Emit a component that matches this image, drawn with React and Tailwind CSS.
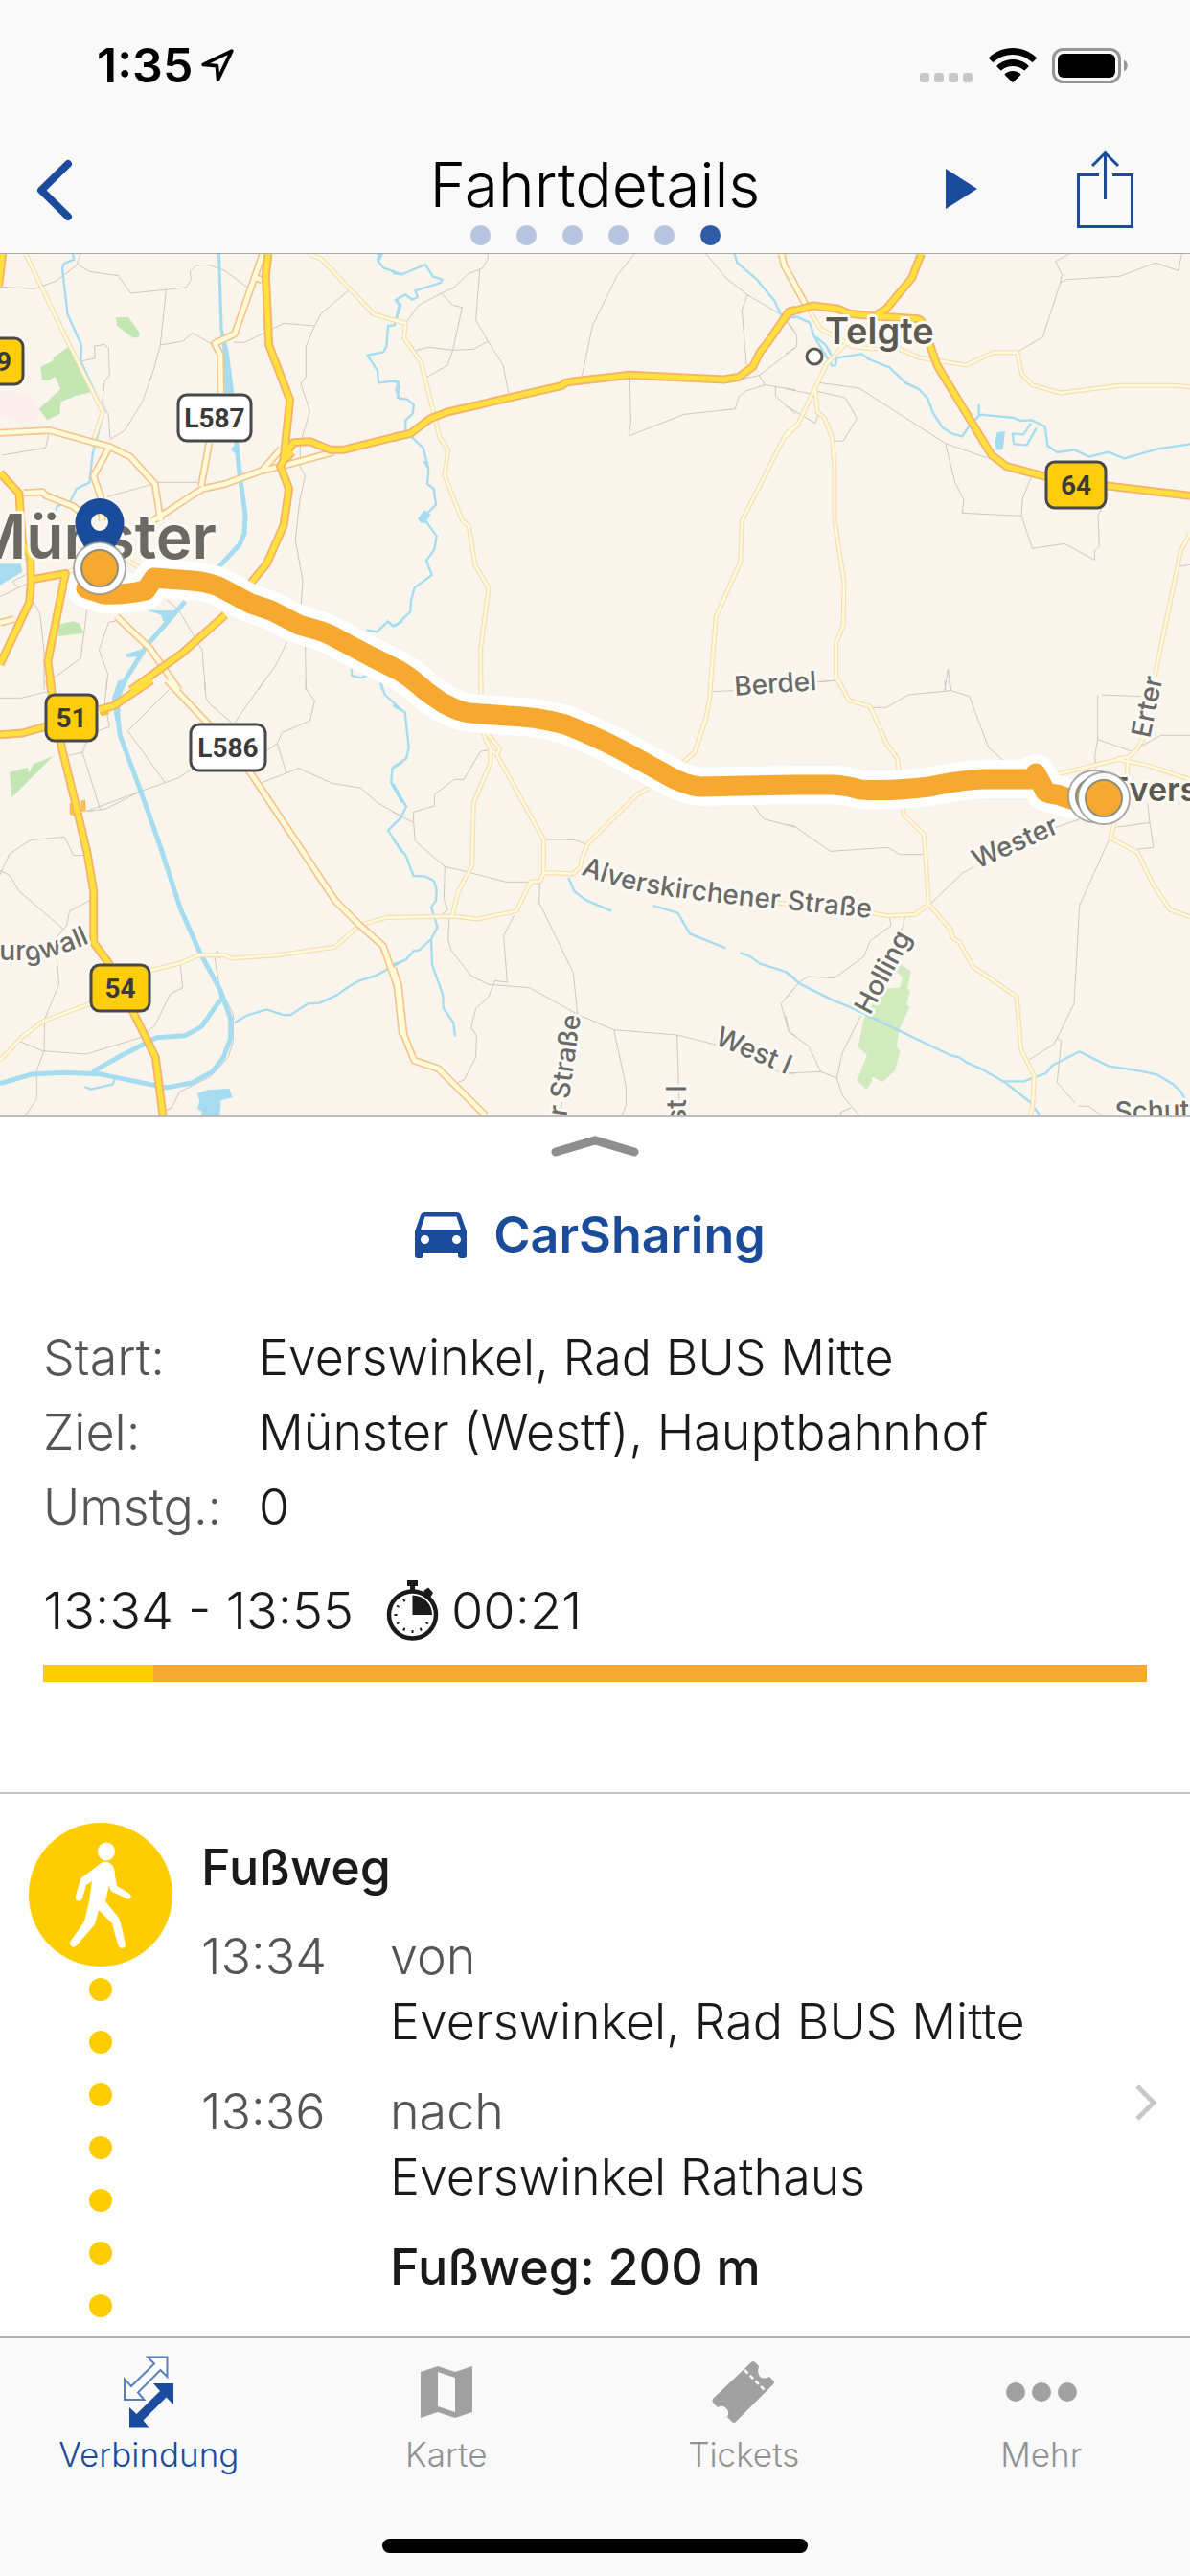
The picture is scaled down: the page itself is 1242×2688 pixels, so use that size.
import React from "react";

const SANS = "font-['Inter','Liberation_Sans',sans-serif]";

/* Map geometry: six tiles, each drawn on its own 3x grid. */
const TILES = [
  {
    x: 0,
    y: 260,
    tracks:
      "M0 118L108 124L175 100L240 50L253 14M245 48L280 70L370 83L410 138L582 120L598 95L595 70L615 50L658 50L705 68L772 118M520 128L502 300L572 288L602 262L663 297M502 300L480 380L445 480L390 568L345 595L340 522L320 480L328 412L343 395L340 312L328 298L296 303L297 342L258 350M733 292L765 292L828 262L888 232L985 240M1090 130L1005 202L985 240L958 305L958 400L942 420L970 508L940 610L940 680L955 710L938 790L925 910L948 1040L943 1110M5 645L143 622L152 580M490 730L618 730M335 775L470 738M0 1088L100 1040M88 1015L40 1040L55 1060M105 1105L125 1140L138 1260L138 1380M272 1130L253 1280L165 1345M360 1165L340 1168L310 1255L338 1330L332 1380M522 1098L560 1130L633 1255L643 1380M898 1230L865 1300L808 1380M956 1245L958 1380",
    stream:
      "M228 14L232 32L200 45L195 60L212 205L255 300L253 350L325 510L290 640L280 730L240 750L220 790L178 805L175 822L158 822M1190 14L1182 35L1200 58L1260 80M1260 145L1240 160L1255 175L1235 238L1215 240L1210 305L1200 322L1150 332L1182 380L1185 418L1240 412L1250 428L1245 465L1260 470M1148 1192L1180 1198L1215 1165L1230 1180L1260 1165M1130 1342L1102 1335L1100 1315M1130 1342L1160 1330L1190 1350L1197 1380",
    canal:
      "M740 600L750 700L768 830L765 890L750 925L680 1000M580 1103L460 1240L372 1380",
    water:
      "M681 14L690 14L698 250L716 320L733 450L704 450L696 300L688 250ZM0 985L65 985L70 1010L0 1052ZM460 1130L550 1132L535 1165L510 1165L505 1145ZM392 1268L450 1250L440 1275L398 1278ZM722 625L740 610L745 650ZM1180 14L1200 14L1188 40Z",
    park:
      "M215 305L240 340L285 448L240 458L190 478L188 515L148 535L122 500L190 438L172 398L155 410L132 410L127 368L165 350L168 338ZM362 213L402 213L437 262L435 277L415 277L367 240ZM180 1175L230 1165L250 1172L262 1202L182 1212ZM10 885L25 880L30 935L12 910ZM72 970L85 962L85 980Z",
    rose: "M0 448L45 448L65 458L95 448L125 500L110 530L70 545L0 520Z",
    lane: "M80 14L210 285L322 510L292 600M965 14L1005 30L1170 203L1260 230M395 970L440 1000M210 1010L250 1000",
    road:
      "M0 575L155 567L293 605L343 618L408 650L485 735L503 850M343 618L293 710L315 775L320 850M823 14L735 265L672 295L690 330L692 450M655 605L630 742M445 870L503 835L610 765L635 750L705 735L820 693L880 680L1045 635M820 693L880 625M75 763L133 760L145 772L230 805L260 830M365 1150L470 1250L560 1380M0 1170L45 1158M803 90L820 97",
    major:
      "M8 14L-4 115M0 700L60 765L70 920L95 960L97 1045L92 1105L0 1300M97 1035L205 1015L150 1290L162 1380M840 14L832 80L842 300L908 472L888 660L878 680L905 750L888 865L835 985L785 1045M705 1145L570 1265L410 1380M888 650L920 605L970 602L1035 628L1075 628L1260 582M885 665L915 635",
  },
  {
    x: 410,
    y: 260,
    tracks:
      "M298 14L298 30L280 60L235 78L192 120L152 138L80 176L45 225M152 138L187 175L217 182L188 315L172 363L108 400M272 65L260 222L298 288L345 362L362 450M72 317L112 307L188 316L253 313L298 288M757 14L703 82L625 240L592 398M980 14L1045 92L1110 143L1215 205L1260 262M1110 143L1093 190L1107 362M742 405L745 545L738 585L912 517L1072 500L1083 462L1103 445L1165 425L1260 440M1100 405L1147 395L1165 425M1147 395L1260 308M1198 432L1198 460L1260 515",
    stream:
      "M0 75L30 78L102 48L125 85L155 95L150 105L70 130L78 150L60 158L40 142L8 160L20 175L5 240M0 415L18 415L10 440L20 467L45 470L66 487L62 515L40 535L40 570L95 622L112 690L108 735L128 750L135 800L95 840L137 898L130 940L105 975L122 1020L68 1060L57 1100L55 1135L10 1178L0 1180M1070 14L1078 42L1140 95L1195 162L1215 205L1260 215",
    water: "M78 843L100 817L118 830L103 857L88 857ZM92 662L112 665L110 690Z",
    lane: "M0 220L40 232L35 278L88 353L147 590L173 628L162 708L217 848L238 868L258 990L300 1062L275 1250L276 1380M1260 553L1230 580L1093 850L1088 980L1012 1150L993 1380",
    road: "M1217 14L1225 50L1295 178",
    major:
      "M0 590L55 577L118 530L170 510L530 427L540 418L570 413L742 394L1037 408L1083 400L1127 368L1150 322L1175 290L1240 195L1260 190",
  },
  {
    x: 820,
    y: 260,
    tracks:
      "M890 14L845 38L865 80L860 105L880 95L1045 85L1158 43L1230 67L1240 14M860 105L805 275L728 320M0 437L75 452M105 418L230 435L500 608L630 653M100 445L187 465L223 530L180 601L148 600M0 490L93 545L102 515M10 230L35 270L35 305L0 328M500 608L530 730L558 785L553 826L738 835L742 780L768 715M738 835L773 937L873 922L967 973L967 945L982 930L978 835L1010 765M1235 993L1266 988M95 1356L160 1350M498 1380L508 1315L518 1380",
    stream:
      "M10 212L35 212L75 230L90 275L145 365L155 365L160 340L238 328L262 345L325 370L375 418L415 437L445 467L460 510L490 557L520 577L553 586L580 545L610 518L715 528L735 537L770 535L812 555L820 615L850 636L905 628L950 650L1010 635L1060 655L1165 625L1266 610M95 275L125 300L150 345M605 485L605 520M768 545L745 580L710 577L715 610L755 613L785 560",
    water: "M662 573L687 570L680 628L660 628L655 603Z",
    lane: "M70 185L110 250L185 290L210 305L280 312L350 310L420 340L565 363L650 323L725 323L740 392L773 425L860 450L1045 427L1220 427L1266 431M185 298L128 360L92 435L38 548L0 588M92 435L100 510L123 530L145 590L153 680L153 845L183 1045L180 1180L158 1232L158 1340L180 1380M185 298L260 235M1266 890L1237 945L1155 1340",
    major:
      "M-10 225L10 198L85 177L165 187L200 202L285 210L415 218L425 225L475 365L645 645L692 680L850 722L1266 772M425 14L395 90L315 187L285 205",
  },
  {
    x: 0,
    y: 710,
    tracks:
      "M0 55L67 55L148 35M335 0L328 70L343 145L310 157M215 235L258 225L272 190M258 225L313 402M640 0L645 55L655 72L725 132M828 0L735 132M530 28L400 158L517 320L560 305L595 280M517 320L440 347L330 403L270 410L440 347M958 0L958 25L985 65L970 127L883 163L868 197L835 220M868 197L897 290M820 320L897 290L935 275L1040 322L1130 337L1180 382L1260 427M260 548L230 548L202 490L95 500L30 543L0 608M0 595L30 610L60 660L198 778M283 688L218 722L208 768L172 812L185 950L140 1060L138 1160L115 1220L115 1310L80 1362M62 1130L133 1160L270 1170L440 1118M565 890L572 962L533 982L485 1080L440 1118M688 960L672 868L680 845L688 870M688 960L730 1045L730 1130L715 1180L660 1240L562 1288L537 1338L520 1345",
    stream:
      "M265 1272L285 1280L352 1265L360 1248M735 1072L775 1048L835 1030L890 1048L910 1047L965 1012L1000 1010L1055 985L1090 960L1125 940L1175 925L1260 880M1190 0L1205 45L1260 95M1260 257L1228 275L1225 322L1260 383M1260 425L1215 470L1235 500L1260 540",
    canal:
      "M385 0L362 50L375 170L440 345L500 515L565 715L625 850L690 970L722 1060L722 1120L700 1180L665 1225L600 1260L520 1275L310 1232L200 1228L100 1233L0 1262M690 1000L630 1085L580 1112L490 1118L370 1180L290 1225",
    water:
      "M370 0L400 0L378 50L375 130L362 130L350 60ZM618 1293L650 1282L718 1278L728 1305L692 1315L688 1362L630 1362L632 1350L618 1340L625 1318ZM682 960L705 1000L690 1010Z",
    park: "M30 288L87 272L90 290L105 262L165 238L37 367Z",
    lane: "M0 1190L70 1115L133 1068L300 1005M470 908L565 885L622 860L703 860L725 870L870 860L1048 835L1125 767L1210 742L1260 742",
    road: "M523 0L660 145L785 290L1050 690L1125 765L1200 832L1243 955L1260 1110",
    major:
      "M155 0L193 210L240 400L273 540L293 660L293 820L340 885L420 1045L487 1180L510 1362M0 170L70 165L160 140M310 92L355 80L475 0",
    ramp: "M225 385L225 415L238 415M260 375L262 410M315 105L340 100",
  },
  {
    x: 410,
    y: 710,
    tracks:
      "M305 218L275 222L222 310L193 310L130 357L130 393L65 412L65 445L0 412M65 445L70 503L163 583L215 595L355 631L430 631M163 583L160 685L172 720L155 730M460 635L458 695L565 915L578 1045M380 735L347 800L358 945L320 940L300 990L260 1027L245 1088L262 1110L260 1180L222 1252L205 1258M177 740L173 812L183 845L245 925L300 952L428 962L578 1045L692 1094L890 1110L1010 1140M692 1094L730 1270L730 1330L718 1362M890 1110L898 1362M477 498L567 499L603 512M1132 393L1160 433L1260 460M1000 35L1065 32M1260 960L1215 1013L1240 1100L1260 1112M1180 1215L1220 1230L1260 1230M528 1320L527 1362",
    stream:
      "M0 78L38 100L50 210L42 245L0 272M0 322L42 395L22 435L0 452M0 495L40 548L65 612L100 613L128 627L137 655L135 690L120 710L140 772L120 810L82 845L65 847L40 875L0 890M120 810L123 890L157 985L158 1025L190 1072L195 1115M550 618L568 660L605 688L685 722M815 705L892 728L930 793L1042 838M1087 853L1115 862L1150 887L1230 912L1260 935",
    lane: "M276 0L276 150L305 215L305 260L253 382L248 580L205 660L185 740M290 160L335 215L325 232L305 215M325 232L472 498L472 605L460 630L432 630L387 722L265 747L185 738L0 742M472 602L565 605L587 585L592 555L610 512L768 355L800 338M905 260L945 225L980 120L993 50L995 0M1200 695L1260 705",
    road: "M0 900L18 955L35 1110L67 1190L142 1215L290 1362",
  },
  {
    x: 820,
    y: 710,
    tracks:
      "M95 5L160 0M498 0L500 33M510 0L518 32L575 50L635 210L678 247L680 252M518 32L385 45L315 85L272 85M990 45L1115 50M977 45L977 185L1085 222M977 185L968 235L972 280M1105 210L1175 172L1266 172M0 452L25 455L140 535L320 523L358 545L432 545M455 698L555 602L590 583M830 465L920 435M1012 500L920 705L903 1012L850 1120L838 1140L763 1187M850 1120L863 1128L850 1258L905 1322M1035 460L1140 445L1152 523L1102 528M1140 445L1133 385M325 740L330 768L265 815L245 865L152 932L70 927L42 945L0 995M373 740L368 770L355 795M235 1050L178 1165L160 1245L110 1225L72 1145L10 1100L0 1050M110 1225L0 1230M160 1245L178 1300L230 1362M172 1362L172 1352L205 1338M915 1332L948 1333L990 1362",
    stream:
      "M0 912L45 950L145 1000L200 1022L515 1173L542 1180L565 1195L620 1220L683 1256L765 1320L795 1360M683 1255L745 1255L815 1230L835 1205L920 1162L1010 1207L1110 1223L1165 1235L1210 1262L1235 1285L1258 1322",
    wood: "M360 888L393 912L380 965L390 970L378 1015L388 1023L355 1095L348 1145L358 1160L342 1222L303 1257L270 1240L270 1255L253 1280L223 1253L255 1172L227 1147L245 1058L300 965L357 962L367 932L348 912Z",
    lane: "M165 0L198 62L265 82L317 200L350 245L370 420L433 483L448 700L405 733L320 737L260 727M448 700L515 778L523 805L545 820L585 895L723 990L737 1155L778 1238L773 1335L765 1362M855 293L1040 248L1130 265L1266 310M1120 180L1100 215L1073 240L1040 245M1073 240L1068 310L1028 450L1018 493L1103 540L1148 635L1203 718L1266 740",
  },
];

/* Painted in order, bottom to top. */
const LAYERS = [
  { key: "rose", fill: "#fceeec" },
  { key: "park", fill: "#c3e6b2" },
  { key: "wood", fill: "#d1eabe" },
  { key: "tracks", stroke: "#cbc8c2", width: 3 },
  { key: "water", fill: "#a5dcf0" },
  { key: "stream", stroke: "#a5dcf0", width: 7 },
  { key: "canal", stroke: "#a5dcf0", width: 15 },
  { key: "lane", stroke: "#f8dcb4", width: 15 },
  { key: "lane", stroke: "#fffadb", width: 8 },
  { key: "road", stroke: "#f6c48c", width: 24 },
  { key: "road", stroke: "#fffad8", width: 14 },
  { key: "ramp", stroke: "#f8b26c", width: 14 },
  { key: "ramp", stroke: "#ffc928", width: 7 },
  { key: "major", stroke: "#f8b26c", width: 27 },
  { key: "major", stroke: "#ffe03c", width: 16 },
];

const ROUTE =
  "M90 614L108 620Q130 621 152 616L161 603L200 606Q215 607 228 612L262 630L283 637L312 652L333 658Q345 662 353 667L387 685L417 700Q430 708 443 720Q460 733 467 736Q478 742 490 744L530 747Q560 748 590 756Q623 769 653 785L693 807Q713 819 730 821L830 819L870 819Q885 820 898 824Q930 826 970 821Q1003 814 1027 813L1077 813L1081 807L1088 820L1091 826Q1097 829 1103 829L1118 834";

function Shield({ x, y, w, label, white }) {
  return (
    <g>
      <rect x={x + 2} y={y + 2} width={w - 4} height={48} rx={9} fill={white ? "#fff" : "#ffcd0b"} stroke="#48484a" strokeWidth={3} />
      <text x={x + w / 2} y={y + 36} textAnchor="middle" className="font-['Roboto',sans-serif] text-[28px] font-bold" fill="#3a3a3a">
        {label}
      </text>
    </g>
  );
}

function Stop({ x, y, color }) {
  return (
    <g>
      <circle cx={x} cy={y} r={27} fill="#fff" stroke="#8d8d8d" strokeOpacity={0.75} strokeWidth={2} />
      <circle cx={x} cy={y} r={19} fill={color} stroke="#8d8d7a" strokeWidth={2} />
    </g>
  );
}

const STREETS = [
  { text: "Berdel", at: "translate(767 726) rotate(-4)" },
  { text: "Wester", at: "translate(1020 907) rotate(-24)" },
  { text: "Holling", at: "translate(908 1060) rotate(-62)" },
  { text: "Erter", at: "translate(1200 771) rotate(-78)" },
  { text: "West I", at: "translate(745 1089) rotate(23)" },
  { text: "er Straße", at: "translate(606 1060) rotate(-82)", end: true },
  { text: "West I", at: "translate(716 1132) rotate(-90)", end: true },
  { text: "Schut", at: "translate(1164 1170) rotate(-2)" },
];

function RouteMap() {
  return (
    <svg viewBox="0 265 1242 899" preserveAspectRatio="xMidYMid slice" className="block aspect-[1242/899] w-full bg-[#f9f5ed]" role="img" aria-label="Karte">
      <rect x="0" y="265" width="1242" height="899" fill="#f9f5ed" />
      {LAYERS.map((layer, i) => (
        <g key={i} fill={layer.fill || "none"} stroke={layer.stroke || "none"} strokeWidth={layer.width} strokeLinejoin="round">
          {TILES.filter((t) => t[layer.key]).map((t) => (
            <path key={t.x + "-" + t.y} transform={`translate(${t.x} ${t.y}) scale(${1 / 3})`} d={t[layer.key]} />
          ))}
        </g>
      ))}

      <g fill="#6a6a68" stroke="#fcf9f3" strokeWidth={6} strokeLinejoin="round" paintOrder="stroke" className={`${SANS} text-[28px] font-medium`}>
        {STREETS.map((s, i) => (
          <text key={i} transform={s.at} textAnchor={s.end ? "end" : "start"}>
            {s.text}
          </text>
        ))}
        <path id="alver" d="M606 912Q650 929 690 934Q760 944 820 949L930 960" fill="none" stroke="none" />
        <path id="wall" d="M-18 1002L35 1002Q60 1000 106 978" fill="none" stroke="none" />
        <text>
          <textPath href="#alver">Alverskirchener Straße</textPath>
        </text>
        <text>
          <textPath href="#wall">burgwall</textPath>
        </text>
      </g>
      <g fill="#5c5a50" stroke="#fcf9f3" strokeWidth={6} strokeLinejoin="round" paintOrder="stroke" className={`${SANS} font-semibold`}>
        <circle cx="850" cy="372" r="8" fill="#fff" stroke="#5c5a50" strokeWidth={3} paintOrder="normal" />
        <text x="861" y="359" className="text-[38px]">Telgte</text>
        <text x="1158" y="836" className="text-[34px]">Everswinkel</text>
        <text x="226" y="583" textAnchor="end" fill="#6b6963" className="text-[64px]">Münster</text>
      </g>

      <Shield x={-50} y={351} w={76} label="219" />
      <Shield x={184} y={410} w={80} label="L587" white />
      <Shield x={197} y={754} w={82} label="L586" white />
      <Shield x={46} y={723} w={57} label="51" />
      <Shield x={93} y={1005} w={65} label="54" />
      <Shield x={1090} y={480} w={66} label="64" />

      <g fill="none" strokeLinejoin="round" strokeLinecap="round">
        <path d={ROUTE} stroke="#fff" strokeWidth={40} />
        <path d={ROUTE} stroke="#f6a931" strokeWidth={21} />
      </g>
      <path fillRule="evenodd" fill="#1b4b9b" d="M104 520a25.500 25.500 0 0 1 25.500 25.500c0 17-17 33-25.500 49c-8.500-16-25.500-32-25.500-49a25.500 25.500 0 0 1 25.500-25.500zm0 16a9 9 0 1 0 0 18a9 9 0 1 0 0-18z" />
      <Stop x={104} y={593} color="#f6a931" />
      <Stop x={1142} y={831} color="#d5ac1f" />
      <Stop x={1152} y={833} color="#f6a931" />
    </svg>
  );
}

function StatusBar() {
  return (
    <div className="flex h-[132px] items-center justify-between pt-1 pr-[64px] pl-[101px]">
      <div className="flex items-center gap-2 text-[50px] leading-[60px] font-semibold text-black">
        <span>1:35</span>
        <svg width="36" height="36" viewBox="0 0 34 34" fill="none" stroke="#000" strokeWidth="3.500" strokeLinejoin="round">
          <path d="M31 3L3 16.500L16.500 17.500L17.500 31Z" />
        </svg>
      </div>
      <div className="flex items-center gap-4">
        <svg width="56" height="36" viewBox="0 0 56 36" fill="#c7c7c7">
          <rect x="0" y="26" width="10" height="10" rx="3" />
          <rect x="15" y="26" width="10" height="10" rx="3" />
          <rect x="30" y="26" width="10" height="10" rx="3" />
          <rect x="45" y="26" width="10" height="10" rx="3" />
        </svg>
        <svg width="50" height="36" viewBox="0 0 50 36" fill="#000">
          <path d="M25 0C34.500 0 43 3.700 49.500 9.700C50 10.200 50 10.800 49.600 11.300L46.300 14.600C45.900 15 45.300 15 44.800 14.600C39.500 9.800 32.500 7 25 7S10.500 9.800 5.200 14.600C4.700 15 4.100 15 3.700 14.600L.4 11.300C0 10.800 0 10.200 .5 9.700C7 3.700 15.500 0 25 0Z" />
          <path d="M25 12C31.300 12 37 14.400 41.200 18.200C41.700 18.700 41.700 19.300 41.300 19.800L37.900 23.100C37.500 23.500 36.900 23.500 36.400 23.100C33.400 20.500 29.400 19 25 19S16.600 20.500 13.600 23.100C13.100 23.500 12.500 23.500 12.100 23.100L8.700 19.800C8.300 19.300 8.300 18.700 8.800 18.200C13 14.400 18.700 12 25 12Z" />
          <path d="M25 24C28 24 30.800 25.100 33 26.800C33.500 27.300 33.500 27.900 33 28.400L25.700 35.600C25.300 36 24.700 36 24.300 35.600L17 28.400C16.500 27.900 16.500 27.300 17 26.800C19.200 25.100 22 24 25 24Z" />
        </svg>
        <svg width="80" height="37" viewBox="0 0 80 37">
          <rect x="1.500" y="1.500" width="69" height="34" rx="10" fill="none" stroke="#959595" strokeWidth="3" />
          <rect x="6" y="6" width="60" height="25" rx="6" fill="#000" />
          <path d="M75 12.500C80 15 80 22 75 24.500Z" fill="#959595" />
        </svg>
      </div>
    </div>
  );
}

function NavBar() {
  return (
    <div className="grid h-[132px] grid-cols-[1fr_auto_1fr] items-start px-[36px]">
      <button type="button" aria-label="Zurück" className="mt-[33px] w-[44px]">
        <svg width="44" height="68" viewBox="0 0 44 68" fill="none" stroke="#1b4b9b" strokeWidth="8" strokeLinecap="round" strokeLinejoin="round">
          <path d="M35 6L7 33.500L35 61" />
        </svg>
      </button>
      <div className="flex flex-col items-center">
        <h1 className="mt-[22px] text-[64px] leading-[78px] font-light text-black">Fahrtdetails</h1>
        <div className="mt-[3px] flex gap-[27px]">
          {[0, 1, 2, 3, 4, 5].map((i) => (
            <span key={i} className={i === 5 ? "size-[21px] rounded-full bg-[#305ba5]" : "size-[21px] rounded-full bg-[#b6c4df]"} />
          ))}
        </div>
      </div>
      <div className="flex items-start justify-end">
        <button type="button" aria-label="Abspielen" className="mt-[44px] mr-[104px]">
          <svg width="33" height="42" viewBox="0 0 33 42" fill="#1b4b9b">
            <path d="M0 0L33 21L0 42Z" />
          </svg>
        </button>
        <button type="button" aria-label="Teilen" className="mt-[25px] mr-[23px]">
          <svg width="59" height="82" viewBox="0 0 59 82" fill="none" stroke="#1b4b9b" strokeWidth="3">
            <path d="M23 25.500H1.500V79.500H57.500V25.500H37" />
            <path d="M29.500 51V3M16 16L29.500 2.500L43 16" />
          </svg>
        </button>
      </div>
    </div>
  );
}

function CarIcon() {
  return (
    <svg width="54" height="48" viewBox="0 0 54 48" fill="#1b4b9b">
      <path fillRule="evenodd" d="M10.500 0H43.500Q47 0 48 3L54 20V45Q54 48 51 48H48Q45 48 45 45V42H9V45Q9 48 6 48H3Q0 48 0 45V20L6 3Q7 0 10.500 0ZM10.500 4.500L6 18H48L43.500 4.500ZM10.500 24A4.500 4.500 0 1 0 10.500 33A4.500 4.500 0 1 0 10.500 24ZM43.500 24A4.500 4.500 0 1 0 43.500 33A4.500 4.500 0 1 0 43.500 24Z" />
    </svg>
  );
}

function StopwatchIcon() {
  const ticks = [120, 150, 180, 210, 240, 270, 300, 330];
  return (
    <svg width="56" height="64" viewBox="0 0 56 64">
      <circle cx="27.500" cy="36" r="24.500" fill="none" stroke="#1a1a1a" strokeWidth="4.500" />
      <path d="M22 0H33V6H30V11H25V6H22Z" fill="#1a1a1a" />
      <path d="M41 14L39 11L44 7.500L49 13L46 18Z" fill="#1a1a1a" />
      <path d="M27.500 15.500A20.500 20.500 0 0 1 48 36H27.500Z" fill="#1a1a1a" />
      {ticks.map((a) => (
        <path key={a} d="M27.500 17V20" stroke="#1a1a1a" strokeWidth="2" transform={`rotate(${a} 27.500 36)`} />
      ))}
    </svg>
  );
}

function WalkIcon() {
  return (
    <svg width="150" height="150" viewBox="0 0 150 150">
      <circle cx="75" cy="75" r="75" fill="#ffcc00" />
      <g fill="#fff">
        <ellipse cx="81" cy="30" rx="9" ry="9.500" />
        <path d="M77 41Q82 39 87 44Q90 48 90 55L92 66L104 73Q108 76 106 79Q103 81 100 78L87 72Q84 69 84 65L80 82L93 98Q95 101 96 105L101 127Q101 131 97 131Q94 130 93 127L87 105L73 91L69 106L50 128Q46 132 43 127Q42 125 44 123L58 103L63 82L66 61L60 65L56 79Q54 83 50 81Q48 79 49 76L54 59Q55 57 57 56Z" />
      </g>
    </svg>
  );
}

const FACTS = [
  ["Start:", "Everswinkel, Rad BUS Mitte"],
  ["Ziel:", "Münster (Westf), Hauptbahnhof"],
  ["Umstg.:", "0"],
];

function Summary() {
  return (
    <section className="pb-[115px]">
      <button type="button" aria-label="Details vergrößern" className="mx-auto mt-[17px] block">
        <svg width="92" height="26" viewBox="0 0 92 26" fill="none" stroke="#8e8e8e" strokeWidth="9" strokeLinecap="round">
          <path d="M5 19L46 7L87 19" />
        </svg>
      </button>
      <h2 className="mt-[48px] flex items-center justify-center gap-[28px] pr-[10px] text-[52px] leading-[64px] font-semibold text-[#1b4b9b]">
        <CarIcon />
        CarSharing
      </h2>
      <dl className="mt-[57px] grid grid-cols-[225px_1fr] px-[45px] text-[52px] leading-[78px] font-light">
        {FACTS.map(([k, v]) => (
          <React.Fragment key={k}>
            <dt className="text-[#555]">{k}</dt>
            <dd className="text-[#1a1a1a]">{v}</dd>
          </React.Fragment>
        ))}
      </dl>
      <div className="mt-[30px] flex items-center px-[45px] text-[54px] leading-[78px] font-light text-[#1a1a1a]">
        <span>13:34 - 13:55</span>
        <span className="mr-3 ml-[34px]">
          <StopwatchIcon />
        </span>
        <span>00:21</span>
      </div>
      <div className="mx-[45px] mt-[17px] flex h-[18px] bg-[#f6a931]">
        <div className="w-[10%] bg-[#ffcc00]" />
      </div>
    </section>
  );
}

function Leg() {
  return (
    <section className="flex border-t-2 border-[#c4c4c4] text-[52px] leading-[68px] font-light text-[#1a1a1a]">
      <div className="flex w-[210px] shrink-0 flex-col items-center gap-[31px] pt-[30px]">
        <div className="-mb-[19px]">
          <WalkIcon />
        </div>
        {[0, 1, 2, 3, 4, 5, 6].map((i) => (
          <span key={i} className="size-[24px] rounded-full bg-[#ffcc00]" />
        ))}
      </div>
      <div className="min-w-0 flex-1 pt-[43px]">
        <h3 className="font-medium">Fußweg</h3>
        <div className="mt-[25px] grid grid-cols-[197px_1fr] gap-y-[26px]">
          <time className="text-[#555]">13:34</time>
          <div>
            <p className="text-[#555]">von</p>
            <p>Everswinkel, Rad BUS Mitte</p>
          </div>
          <time className="text-[#555]">13:36</time>
          <div>
            <p className="text-[#555]">nach</p>
            <p>Everswinkel Rathaus</p>
          </div>
          <p className="col-start-2 font-medium">Fußweg: 200 m</p>
        </div>
      </div>
      <button type="button" aria-label="Fußweg öffnen" className="mr-[32px] self-center pt-[98px]">
        <svg width="28" height="40" viewBox="0 0 28 40" fill="none" stroke="#c7c7cc" strokeWidth="5">
          <path d="M5 3L22 20L5 37" />
        </svg>
      </button>
    </section>
  );
}

function TabIcon({ name }) {
  if (name === "Verbindung")
    return (
      <svg width="52" height="76" viewBox="0 0 52 76">
        <path d="M25 1.500H45.500V22L38.500 15L15 38.500L21.500 46H1V24.500L8 32L32 8.500Z" fill="#fff" stroke="#5b7fbb" strokeWidth="2" />
        <path d="M31 29H52V51L44.500 43.500L20.500 67.500L27 75.500H6V54L13.500 61L38 37Z" fill="#1b4b9b" />
      </svg>
    );
  if (name === "Karte")
    return (
      <svg width="54" height="54" viewBox="0 0 54 54" fill="#a1a1a1">
        <path fillRule="evenodd" d="M0 6L18 0L36 6L54 0V48L36 54L18 48L0 54ZM18 6V42L36 48V12Z" />
      </svg>
    );
  if (name === "Tickets")
    return (
      <svg width="66" height="66" viewBox="0 0 66 66">
        <path fill="#a1a1a1" d="M41 2Q43 0 45 2L49 6Q47 13 50 17Q54 20 60 17L64 21Q66 23 64 25L25 64Q23 66 21 64L16 59Q19 54 15 50Q11 46 6 49L1 44Q0 42 1 40Z" />
        <path d="M34 10L55 31" stroke="#f9f9f9" strokeWidth="2.500" strokeDasharray="5 3" />
      </svg>
    );
  return (
    <svg width="74" height="20" viewBox="0 0 74 20" fill="#a1a1a1">
      <circle cx="10" cy="10" r="10" />
      <circle cx="37" cy="10" r="10" />
      <circle cx="64" cy="10" r="10" />
    </svg>
  );
}

function TabBar() {
  return (
    <footer className="border-t-2 border-[#b2b2b2] bg-[#f9f9f9]">
      <nav className="grid grid-cols-4 pt-[14px] text-[35px] leading-[46px] font-light">
        {["Verbindung", "Karte", "Tickets", "Mehr"].map((name, i) => (
          <a key={name} href={"#" + name.toLowerCase()} className={i === 0 ? "flex flex-col items-center text-[#1b4b9b]" : "flex flex-col items-center text-[#929292]"}>
            <span className="flex h-[84px] items-center">
              <TabIcon name={name} />
            </span>
            <span>{name}</span>
          </a>
        ))}
      </nav>
      <div className="mx-auto mt-[65px] mb-[24px] h-[15px] w-[444px] rounded-full bg-black" />
    </footer>
  );
}

export default function App() {
  return (
    <div className="flex min-h-screen flex-col bg-white font-['Inter','Liberation_Sans',sans-serif]">
      <header className="border-b border-[#a9a9a6] bg-[#f9f9f9]">
        <StatusBar />
        <NavBar />
      </header>
      <RouteMap />
      <main className="flex-1 border-t-2 border-[#bdbdbd]">
        <Summary />
        <Leg />
      </main>
      <TabBar />
    </div>
  );
}
